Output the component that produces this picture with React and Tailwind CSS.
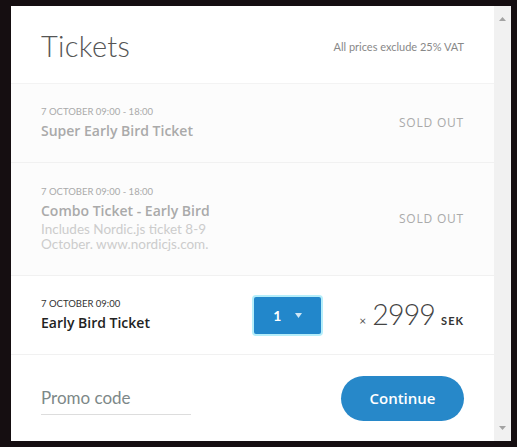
const tickets = [
    {
        date: '7 OCTOBER 09:00 - 18:00',
        name: 'Super Early Bird Ticket',
        soldOut: true,
    },
    {
        date: '7 OCTOBER 09:00 - 18:00',
        name: 'Combo Ticket - Early Bird',
        description: 'Includes Nordic.js ticket 8-9 October. www.nordicjs.com.',
        soldOut: true,
    },
    {
        date: '7 OCTOBER 09:00',
        name: 'Early Bird Ticket',
        price: '2999',
    },
];

const App = () => {
  return (
    <div className="w-[517px] h-[447px] bg-[#150e11] pt-[6px] pl-[11px] overflow-hidden font-['Lato',sans-serif]">
        <div className="flex h-[435px]">
            <div className="w-[483px] bg-white flex flex-col">
                <div className="h-[78px] flex items-center justify-between px-[30px] border-b border-[#f3f3f3]">
                    <h1 className="text-[29px] font-light text-[#555] tracking-[0.3px] pt-[2px]">Tickets</h1>
                    <p className="text-[11px] text-[#888] pt-[5px]">All prices exclude 25% VAT</p>
                </div>
                {tickets.map((t, i) => (
                    <div
                        key={i}
                        className={`flex items-center justify-between px-[30px] border-b border-[#f1f1f1] ${t.soldOut ? 'bg-[#fcfcfc]' : 'bg-white'} ${t.description ? 'h-[113px]' : 'h-[79px]'}`}
                    >
                        <div className="w-[190px]">
                            <p className={`text-[9.5px] leading-[12px] ${t.soldOut ? 'text-[#aaa]' : 'text-[#333]'}`}>{t.date}</p>
                            <p className={`text-[14px] leading-[20px] font-semibold mt-[3px] font-['Open_Sans',sans-serif] ${t.soldOut ? 'text-[#aaa]' : 'text-[#222]'}`}>{t.name}</p>
                            {t.description && (
                                <p className="text-[13.5px] leading-[15px] text-[#ccc] mt-[1px] w-[170px]">{t.description}</p>
                            )}
                        </div>
                        {t.soldOut ? (
                            <p className="text-[12px] text-[#aaa] tracking-[0.8px] font-['Open_Sans',sans-serif]">SOLD OUT</p>
                        ) : (
                            <div className="flex items-center">
                                <div className="w-[71px] h-[41px] rounded-[4px] border-2 border-[#b5eefa] bg-[#2287cb] flex items-center justify-center gap-[14px] text-white">
                                    <span className="text-[14px] font-bold">1</span>
                                    <svg width="7" height="5" viewBox="0 0 7 5"><path d="M0 0h7L3.5 5z" fill="#cfe6f5" /></svg>
                                </div>
                                <div className="flex items-baseline ml-[36px] text-[#333]">
                                    <span className="text-[12px] mr-[6px] text-[#555]">×</span>
                                    <span className="text-[28.5px] font-light leading-none tracking-[-0.8px] text-[#444]">{t.price}</span>
                                    <span className="text-[11px] font-bold ml-[6px] tracking-[1px]">SEK</span>
                                </div>
                            </div>
                        )}
                    </div>
                ))}
                <div className="flex-1 flex items-center justify-between px-[30px] pb-[2px]">
                    <div className="w-[150px] border-b border-[#ddd] pb-[4px] mt-[6px]">
                        <p className="text-[17px] text-[#7d8888]">Promo code</p>
                    </div>
                    <button className="w-[123px] h-[45px] mt-[2px] rounded-full bg-[#2788c9] text-white text-[15px] font-semibold font-['Open_Sans',sans-serif]">Continue</button>
                </div>
            </div>
            <div className="w-[17px] bg-[#f1f1f1] flex flex-col items-center justify-between py-[11px]">
                <svg width="7" height="4" viewBox="0 0 7 4"><path d="M0 4h7L3.5 0z" fill="#a3a3a3" /></svg>
                <svg width="7" height="4" viewBox="0 0 7 4"><path d="M0 0h7L3.5 4z" fill="#a3a3a3" /></svg>
            </div>
        </div>
    </div>
  );
};

export default App;
